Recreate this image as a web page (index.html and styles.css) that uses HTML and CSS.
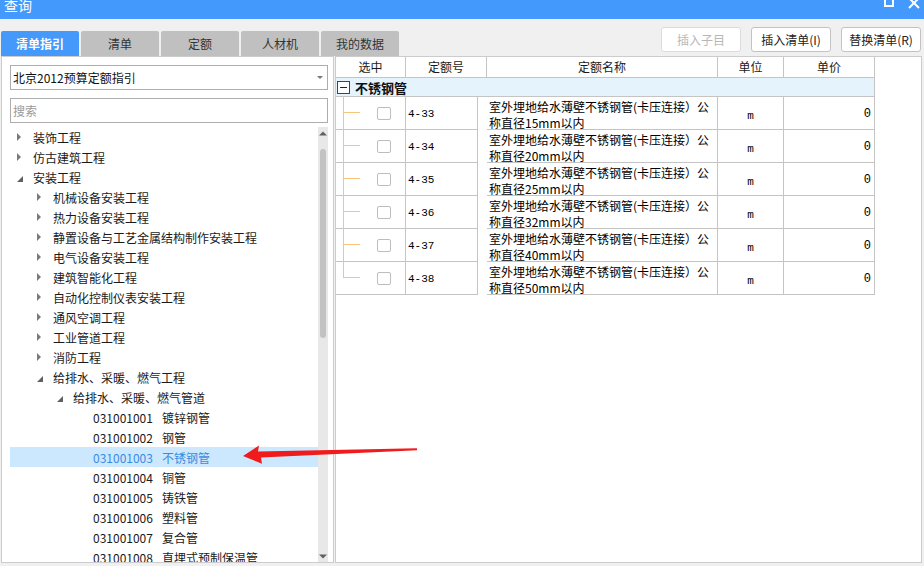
FILE: index.html
```html
<!DOCTYPE html>
<html lang="zh-CN">
<head>
<meta charset="utf-8">
<title>查询</title>
<link rel="stylesheet" href="styles.css">
</head>
<body>
<div class="titlebar">
  <span class="title">查询</span>
  <div class="winbtns">
    <svg class="wb-restore" width="10" height="8" viewBox="0 0 10 8"><rect x="1" y="-1" width="8" height="7" fill="none" stroke="#fff" stroke-width="2"/></svg>
    <svg class="wb-close" width="12" height="9" viewBox="0 0 12 9"><path d="M1 -2 L11 8 M11 -2 L1 8" stroke="#fff" stroke-width="2"/></svg>
  </div>
</div>

<div class="toolbar">
  <div class="tabs">
    <div class="tab active">清单指引</div>
    <div class="tab">清单</div>
    <div class="tab">定额</div>
    <div class="tab">人材机</div>
    <div class="tab">我的数据</div>
  </div>
  <div class="btns">
    <div class="btn disabled">插入子目</div>
    <div class="btn">插入清单(I)</div>
    <div class="btn">替换清单(R)</div>
  </div>
</div>

<div class="main">
  <div class="left">
    <div class="select"><span>北京2012预算定额指引</span><i class="caret"></i></div>
    <div class="search">搜索</div>
    <div class="treewrap">
      <div class="tree">
        <div class="row lv0"><span class="tg"><svg width="5" height="8" viewBox="0 0 5 8"><path d="M0 0 L4 4 L0 8Z" fill="#7a7a7a"/></svg></span><span>装饰工程</span></div>
        <div class="row lv0"><span class="tg"><svg width="5" height="8" viewBox="0 0 5 8"><path d="M0 0 L4 4 L0 8Z" fill="#7a7a7a"/></svg></span><span>仿古建筑工程</span></div>
        <div class="row lv0"><span class="tg e"><svg width="6" height="6" viewBox="0 0 6 6"><path d="M6 0 L6 6 L0 6Z" fill="#606060"/></svg></span><span>安装工程</span></div>
        <div class="row lv1"><span class="tg"><svg width="5" height="8" viewBox="0 0 5 8"><path d="M0 0 L4 4 L0 8Z" fill="#7a7a7a"/></svg></span><span>机械设备安装工程</span></div>
        <div class="row lv1"><span class="tg"><svg width="5" height="8" viewBox="0 0 5 8"><path d="M0 0 L4 4 L0 8Z" fill="#7a7a7a"/></svg></span><span>热力设备安装工程</span></div>
        <div class="row lv1"><span class="tg"><svg width="5" height="8" viewBox="0 0 5 8"><path d="M0 0 L4 4 L0 8Z" fill="#7a7a7a"/></svg></span><span>静置设备与工艺金属结构制作安装工程</span></div>
        <div class="row lv1"><span class="tg"><svg width="5" height="8" viewBox="0 0 5 8"><path d="M0 0 L4 4 L0 8Z" fill="#7a7a7a"/></svg></span><span>电气设备安装工程</span></div>
        <div class="row lv1"><span class="tg"><svg width="5" height="8" viewBox="0 0 5 8"><path d="M0 0 L4 4 L0 8Z" fill="#7a7a7a"/></svg></span><span>建筑智能化工程</span></div>
        <div class="row lv1"><span class="tg"><svg width="5" height="8" viewBox="0 0 5 8"><path d="M0 0 L4 4 L0 8Z" fill="#7a7a7a"/></svg></span><span>自动化控制仪表安装工程</span></div>
        <div class="row lv1"><span class="tg"><svg width="5" height="8" viewBox="0 0 5 8"><path d="M0 0 L4 4 L0 8Z" fill="#7a7a7a"/></svg></span><span>通风空调工程</span></div>
        <div class="row lv1"><span class="tg"><svg width="5" height="8" viewBox="0 0 5 8"><path d="M0 0 L4 4 L0 8Z" fill="#7a7a7a"/></svg></span><span>工业管道工程</span></div>
        <div class="row lv1"><span class="tg"><svg width="5" height="8" viewBox="0 0 5 8"><path d="M0 0 L4 4 L0 8Z" fill="#7a7a7a"/></svg></span><span>消防工程</span></div>
        <div class="row lv1"><span class="tg e"><svg width="6" height="6" viewBox="0 0 6 6"><path d="M6 0 L6 6 L0 6Z" fill="#606060"/></svg></span><span>给排水、采暖、燃气工程</span></div>
        <div class="row lv2"><span class="tg e"><svg width="6" height="6" viewBox="0 0 6 6"><path d="M6 0 L6 6 L0 6Z" fill="#606060"/></svg></span><span>给排水、采暖、燃气管道</span></div>
        <div class="row lv3"><span class="tg"></span><span class="code">031001001</span><span>镀锌钢管</span></div>
        <div class="row lv3"><span class="tg"></span><span class="code">031001002</span><span>钢管</span></div>
        <div class="row lv3 sel"><span class="tg"></span><span class="code">031001003</span><span>不锈钢管</span></div>
        <div class="row lv3"><span class="tg"></span><span class="code">031001004</span><span>铜管</span></div>
        <div class="row lv3"><span class="tg"></span><span class="code">031001005</span><span>铸铁管</span></div>
        <div class="row lv3"><span class="tg"></span><span class="code">031001006</span><span>塑料管</span></div>
        <div class="row lv3"><span class="tg"></span><span class="code">031001007</span><span>复合管</span></div>
        <div class="row lv3"><span class="tg"></span><span class="code">031001008</span><span>直埋式预制保温管</span></div>
      </div>
      <div class="vscroll">
        <svg class="sc-up" width="8" height="5" viewBox="0 0 8 5"><path d="M0 4.5 L4 0.5 L8 4.5Z" fill="#606060"/></svg>
        <div class="sc-track"><div class="sc-thumb"></div></div>
        <svg class="sc-down" width="8" height="5" viewBox="0 0 8 5"><path d="M0 0.5 L4 4.5 L8 0.5Z" fill="#606060"/></svg>
      </div>
    </div>
  </div>

  <div class="right">
    <div class="grid">
      <div class="hd">选中</div>
      <div class="hd">定额号</div>
      <div class="hd">定额名称</div>
      <div class="hd">单位</div>
      <div class="hd">单价</div>

      <div class="group"><i class="minus"></i><b>不锈钢管</b></div>

      <div class="c sel"><i class="cb"></i></div>
      <div class="c code">4-33</div>
      <div class="c name">室外埋地给水薄壁不锈钢管(卡压连接）公<br>称直径15mm以内</div>
      <div class="c unit">m</div>
      <div class="c price">0</div>

      <div class="c sel"><i class="cb"></i></div>
      <div class="c code">4-34</div>
      <div class="c name">室外埋地给水薄壁不锈钢管(卡压连接）公<br>称直径20mm以内</div>
      <div class="c unit">m</div>
      <div class="c price">0</div>

      <div class="c sel"><i class="cb"></i></div>
      <div class="c code">4-35</div>
      <div class="c name">室外埋地给水薄壁不锈钢管(卡压连接）公<br>称直径25mm以内</div>
      <div class="c unit">m</div>
      <div class="c price">0</div>

      <div class="c sel"><i class="cb"></i></div>
      <div class="c code">4-36</div>
      <div class="c name">室外埋地给水薄壁不锈钢管(卡压连接）公<br>称直径32mm以内</div>
      <div class="c unit">m</div>
      <div class="c price">0</div>

      <div class="c sel"><i class="cb"></i></div>
      <div class="c code">4-37</div>
      <div class="c name">室外埋地给水薄壁不锈钢管(卡压连接）公<br>称直径40mm以内</div>
      <div class="c unit">m</div>
      <div class="c price">0</div>

      <div class="c sel last"><i class="cb"></i></div>
      <div class="c code">4-38</div>
      <div class="c name">室外埋地给水薄壁不锈钢管(卡压连接）公<br>称直径50mm以内</div>
      <div class="c unit">m</div>
      <div class="c price">0</div>
    </div>
  </div>
</div>

<svg class="arrow" width="924" height="566" viewBox="0 0 924 566">
  <polygon points="243,456 259,445.5 258,451.5 417,448.3 417,450.2 261,457.5 262,463.8" fill="#f01c1c"/>
</svg>
</body>
</html>
```

FILE: styles.css
```css
* { box-sizing: border-box; }

html, body {
  margin: 0;
  padding: 0;
}

body {
  width: 924px;
  height: 566px;
  overflow: hidden;
  background: #f0f0f0;
  font-family: "Noto Sans CJK SC", "Noto Sans", sans-serif;
  font-size: 12px;
  color: #1a1a1a;
  position: relative;
}

/* title bar */
.titlebar {
  height: 19px;
  background: #4499fd;
  display: flex;
  align-items: flex-start;
  overflow: hidden;
  padding: 0 4px 0 4px;
}
.title {
  color: #fff;
  font-size: 14px;
  line-height: 14px;
  margin-top: -2px;
}
.winbtns {
  margin-left: auto;
  display: flex;
  align-items: flex-start;
  gap: 14px;
}
.wb-restore { display: block; }
.wb-close { display: block; }

/* toolbar */
.toolbar {
  height: 37px;
  display: flex;
  justify-content: space-between;
  padding: 0 3px 0 1px;
}
.tabs {
  display: flex;
  align-self: flex-end;
  gap: 2px;
}
.tab {
  width: 78px;
  height: 25px;
  line-height: 25px;
  text-align: center;
  background: #c0c0c0;
  color: #333;
  font-size: 12px;
  border-radius: 2px 2px 0 0;
}
.tab.active {
  background: #4499fb;
  color: #fff;
  font-weight: bold;
}
.btns {
  display: flex;
  gap: 10px;
  margin-top: 8px;
}
.btn {
  width: 80px;
  height: 25px;
  line-height: 23px;
  text-align: center;
  background: #fff;
  border: 1px solid #c3c3c3;
  border-radius: 3px;
  color: #222;
  font-size: 12px;
}
.btn.disabled {
  border-color: #dcdcdc;
  color: #b8b8b8;
}

/* main */
.main {
  display: flex;
  height: 507px;
  padding-left: 1px;
  gap: 1px;
}

.left {
  width: 333px;
  background: #fff;
  border: 1px solid #cccccc;
  padding: 8px 5px 0 8px;
  display: flex;
  flex-direction: column;
}
.select {
  height: 25px;
  border: 1px solid #adadad;
  display: flex;
  align-items: center;
  padding: 0 4px 0 2px;
  color: #111;
}
.caret {
  margin-left: auto;
  width: 0;
  height: 0;
  border-left: 3px solid transparent;
  border-right: 3px solid transparent;
  border-top: 3px solid #777;
}
.search {
  height: 25px;
  border: 1px solid #adadad;
  margin-top: 8px;
  line-height: 23px;
  padding-left: 2px;
  color: #9a9a9a;
}
.treewrap {
  flex: 1;
  margin-top: 4px;
  display: flex;
  overflow: hidden;
  min-height: 0;
}
.tree {
  width: 308px;
  overflow: hidden;
}
.row {
  height: 20px;
  display: flex;
  align-items: center;
  white-space: nowrap;
  color: #1a1a1a;
}
.row.lv0 { padding-left: 7px; }
.row.lv1 { padding-left: 27px; }
.row.lv2 { padding-left: 47px; }
.row.lv3 { padding-left: 67px; }
.tg {
  width: 16px;
  flex: none;
  display: flex;
  align-items: center;
}
.tg svg { display: block; }
.tg.e svg { margin-top: 4px; }
.code {
  margin-right: 9px;
}
.row.sel {
  background: #cce8ff;
  color: #3b8be0;
}

.vscroll {
  width: 10px;
  background: #e8e8e8;
  display: flex;
  flex-direction: column;
  align-items: center;
}
.sc-up {
  display: block;
  margin-top: 4px;
}
.sc-track {
  flex: 1;
  width: 100%;
  display: flex;
  justify-content: center;
}
.sc-thumb {
  margin-top: 13px;
  width: 6px;
  height: 189px;
  background: #c2c2c2;
  border-radius: 3px;
}
.sc-down {
  display: block;
  margin-bottom: 3px;
}

/* right panel */
.right {
  width: 587px;
  background: #fff;
  border: 1px solid #cccccc;
}
.grid {
  display: grid;
  grid-template-columns: 70px 81px 231px 66px 91px;
  width: 539px;
}
.hd {
  height: 21px;
  line-height: 20px;
  text-align: center;
  border-right: 1px solid #c4c4c4;
  border-bottom: 1px solid #c4c4c4;
  color: #1a1a1a;
  font-size: 12px;
}
.group {
  grid-column: 1 / -1;
  height: 19px;
  background: #e5f3fd;
  border-right: 1px solid #c4c4c4;
  border-bottom: 1px solid #c4c4c4;
  display: flex;
  align-items: center;
  padding-left: 1px;
}
.group b {
  font-size: 13px;
  margin-left: 5px;
  color: #111;
}
.minus {
  width: 13px;
  height: 13px;
  border: 1px solid #444;
  background: #fff;
  display: flex;
  align-items: center;
  justify-content: center;
}
.minus::before {
  content: "";
  width: 7px;
  height: 1px;
  background: #222;
}
.c {
  height: 33px;
  border-right: 1px solid #c4c4c4;
  border-bottom: 1px solid #c4c4c4;
  color: #000;
}
.c.sel {
  position: relative;
  display: flex;
  align-items: center;
  padding-left: 41px;
}
.c.sel::before {
  content: "";
  position: absolute;
  left: 7px;
  top: -1px;
  bottom: -1px;
  width: 1px;
  background: #f8c47c;
}
.c.sel.last::before {
  bottom: 16px;
}
.c.sel::after {
  content: "";
  position: absolute;
  left: 7px;
  top: 15px;
  width: 17px;
  height: 1px;
  background: #f8c47c;
}
.cb {
  width: 14px;
  height: 13px;
  border: 1px solid #bdbdbd;
  border-radius: 2px;
  background: #fff;
}
.c.code {
  font-family: "Liberation Mono", "Noto Sans CJK SC", monospace;
  font-size: 11px;
  display: flex;
  align-items: center;
  padding-left: 2px;
  padding-top: 2px;
}
.c.name {
  font-size: 12px;
  line-height: 16px;
  padding-left: 2px;
  padding-top: 2px;
  white-space: nowrap;
  overflow: hidden;
}
.c.unit {
  font-family: "Liberation Mono", monospace;
  font-size: 11px;
  text-align: center;
  line-height: 33px;
  padding-top: 3px;
}
.c.price {
  font-family: "Liberation Mono", monospace;
  font-size: 12px;
  text-align: right;
  padding-right: 3px;
  line-height: 33px;
  padding-top: 1px;
}

/* red annotation arrow overlay */
.arrow {
  position: absolute;
  left: 0;
  top: 0;
  pointer-events: none;
}
```
